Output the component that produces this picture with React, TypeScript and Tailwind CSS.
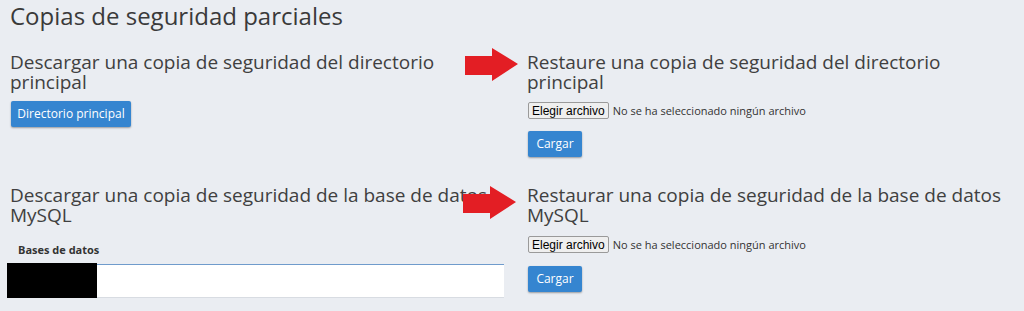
import React from "react";

function Arrow({ className }: { className: string }) {
  return (
    <svg
      className={className}
      width="56"
      height="34"
      viewBox="0 0 56 34"
      xmlns="http://www.w3.org/2000/svg"
    >
      <polygon points="0,8 27,8 27,0 53,16 27,33 27,27 0,27" fill="#e31e24" />
    </svg>
  );
}

function FileInput() {
  return (
    <div className="flex items-center h-[17px]">
      <div className="h-[17px] px-[3px] flex items-center bg-[#efefef] border border-[#9a9a9a] rounded-[2px] text-[12px] text-black font-['Liberation_Sans',sans-serif] leading-none">
        Elegir archivo
      </div>
      <span className="ml-[4px] text-[11px] text-[#333] leading-none">
        No se ha seleccionado ningún archivo
      </span>
    </div>
  );
}

function BlueButton({ children, w }: { children: React.ReactNode; w: string }) {
  return (
    <div
      className={`${w} h-[26px] flex items-center justify-center bg-[#3585d0] text-white text-[12px] rounded-[2px] shadow-[0_1px_2px_rgba(0,0,0,0.35)]`}
    >
      {children}
    </div>
  );
}

export default function App() {
  return (
    <div className="relative w-[1024px] h-[311px] overflow-hidden bg-[#eaedf2] font-['Open_Sans',sans-serif] text-[#404040]">
      <div className="pl-[10px]">
        <h1 className="pt-[3px] text-[24px] leading-[26px] text-[#3a3a3a]">
          Copias de seguridad parciales
        </h1>

        <div className="grid grid-cols-[518px_1fr] mt-[23px]">
          <div className="pr-[20px]">
            <h2 className="text-[19px] leading-[20px]">
              Descargar una copia de seguridad del directorio principal
            </h2>
            <div className="mt-[9px] ml-[1px]">
              <BlueButton w="w-[120px]">Directorio principal</BlueButton>
            </div>
          </div>
          <div className="pr-[10px]">
            <h2 className="text-[19px] leading-[20px] -ml-[1px]">
              Restaure una copia de seguridad del directorio principal
            </h2>
            <div className="mt-[10px]">
              <FileInput />
            </div>
            <div className="mt-[12px]">
              <BlueButton w="w-[54px]">Cargar</BlueButton>
            </div>
          </div>
        </div>

        <div className="grid grid-cols-[518px_1fr] mt-[28px]">
          <div className="pr-[20px]">
            <h2 className="text-[19px] leading-[20px]">
              Descargar una copia de seguridad de la base de datos MySQL
            </h2>
            <div className="mt-[17px] pl-[8px] text-[11px] leading-[16px] font-bold text-[#333]">
              Bases de datos
            </div>
            <div className="mt-[6px] -ml-[3px] w-[497px] h-[34px] bg-white border-t border-[#6f9bcc] border-b border-b-[#d8dce2] relative">
              <div className="absolute left-0 top-[-2px] w-[90px] h-[35px] bg-black" />
            </div>
          </div>
          <div className="pr-[10px]">
            <h2 className="text-[19px] leading-[20px] -ml-[1px]">
              Restaurar una copia de seguridad de la base de datos MySQL
            </h2>
            <div className="mt-[11px]">
              <FileInput />
            </div>
            <div className="mt-[13px]">
              <BlueButton w="w-[54px]">Cargar</BlueButton>
            </div>
          </div>
        </div>
      </div>

      <Arrow className="absolute left-[465px] top-[48px]" />
      <Arrow className="absolute left-[463px] top-[186px]" />
    </div>
  );
}
